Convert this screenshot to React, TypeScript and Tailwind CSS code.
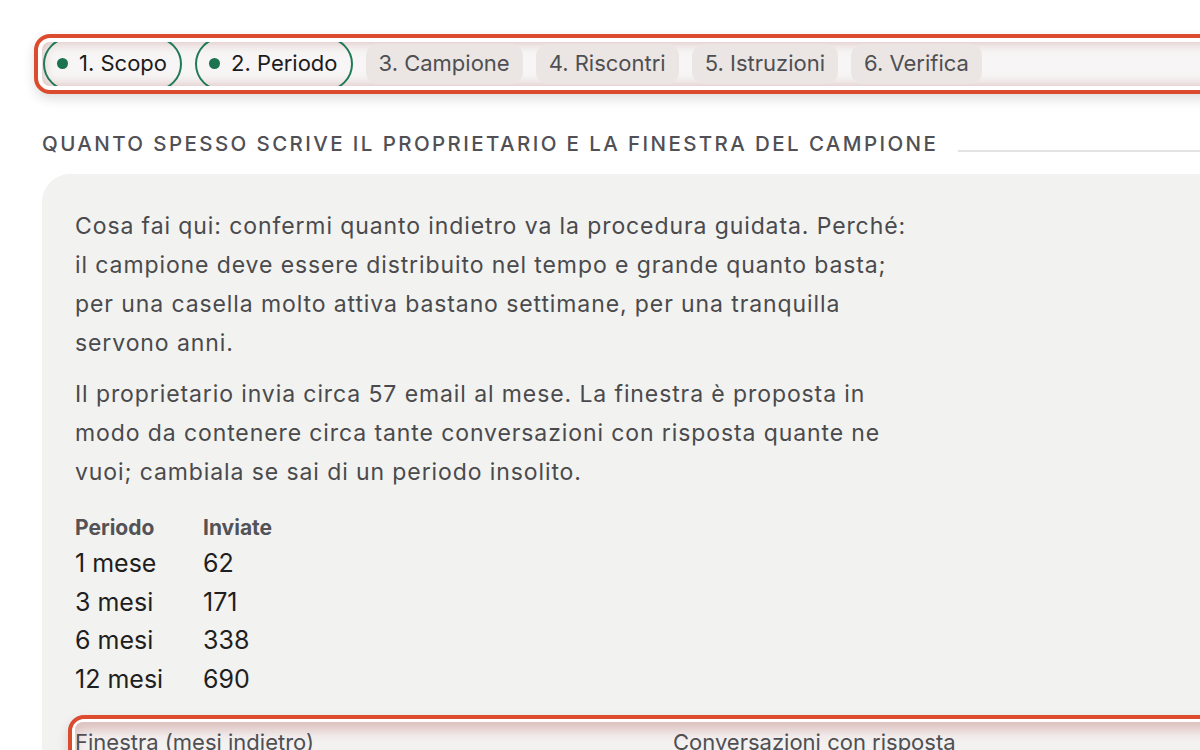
import React from "react";

const tabsDone = ["1. Scopo", "2. Periodo"];
const tabsTodo = ["3. Campione", "4. Riscontri", "5. Istruzioni", "6. Verifica"];
const rows = [
  ["1 mese", "62"],
  ["3 mesi", "171"],
  ["6 mesi", "338"],
  ["12 mesi", "690"],
];

export default function App() {
  return (
    <div
      className="w-[1200px] h-[750px] overflow-hidden bg-white"
      style={{ fontFamily: "Inter, 'Noto Sans', sans-serif" }}
    >
      <div className="w-[1320px] pl-[34px] pt-[34px]">
        {/* Tab bar with highlight */}
        <div className="rounded-[16px] border-[4px] border-[#dc4b2e] bg-white p-[4px] shadow-[0_5px_12px_rgba(0,0,0,0.13)]">
          <div className="h-[44px] overflow-hidden rounded-[8px] bg-[#f7f5f5] shadow-[inset_0_0_12px_rgba(190,130,125,0.55)] flex items-center gap-[13px] pl-[1px] pb-[1px]">
            {tabsDone.map((t) => (
              <div
                key={t}
                className="h-[54px] shrink-0 rounded-full border-[2px] border-[#1f7a55] flex items-center gap-[11px] pl-[12px] pr-[13px] text-[22px] text-[#1c1c1c]"
              >
                <span className="w-[11px] h-[11px] rounded-full bg-[#1b7350]" />
                <span>{t}</span>
              </div>
            ))}
            {tabsTodo.map((t) => (
              <div
                key={t}
                className="h-[40px] shrink-0 rounded-[12px] bg-[#ebe6e4] flex items-center px-[13px] text-[22px] text-[#4f4f52]"
              >
                {t}
              </div>
            ))}
          </div>
        </div>

        {/* Section heading */}
        <div className="mt-[40px] flex items-center pl-[8px]">
          <h2 className="shrink-0 text-[20.5px] font-medium tracking-[2.4px] text-[#505055] leading-none">
            QUANTO SPESSO SCRIVE IL PROPRIETARIO E LA FINESTRA DEL CAMPIONE
          </h2>
          <div className="ml-[20px] mt-[14px] h-[2px] flex-1 bg-[#e3e3e3]" />
        </div>

        {/* Card */}
        <div className="mt-[19px] ml-[8px] rounded-tl-[28px] rounded-tr-[28px] bg-[#f2f2f0] pl-[33px] pt-[33px] pb-[40px]">
          <div className="max-w-[850px] text-[23px] tracking-[0.9px] leading-[39px] text-[#4a4a4d]">
            <p>
              Cosa fai qui: confermi quanto indietro va la procedura guidata. Perché:
              il campione deve essere distribuito nel tempo e grande quanto basta;
              per una casella molto attiva bastano settimane, per una tranquilla
              servono anni.
            </p>
            <p className="mt-[12px]">
              Il proprietario invia circa 57 email al mese. La finestra è proposta in
              modo da contenere circa tante conversazioni con risposta quante ne
              vuoi; cambiala se sai di un periodo insolito.
            </p>
          </div>

          <div className="mt-[19px]">
            <div className="flex h-[34px] items-center text-[21px] font-bold text-[#535357]">
              <div className="w-[128px]">Periodo</div>
              <div>Inviate</div>
            </div>
            {rows.map(([a, b]) => (
              <div key={a} className="flex h-[38.7px] items-center text-[25px] text-[#1f1f22]">
                <div className="w-[128px]">{a}</div>
                <div>{b}</div>
              </div>
            ))}
          </div>

          <div className="mt-[16px] -ml-[7px] rounded-[16px] border-[4px] border-[#dc4b2e] bg-white p-[3px] shadow-[0_5px_12px_rgba(0,0,0,0.13)]">
            <div className="h-[60px] rounded-[8px] bg-[#f4f1f1] shadow-[inset_0_8px_12px_rgba(190,130,125,0.45)] flex pt-[4px] text-[22px] text-[#4f4f52]">
              <div className="w-[598px]">Finestra (mesi indietro)</div>
              <div>Conversazioni con risposta</div>
            </div>
          </div>
        </div>
      </div>
    </div>
  );
}
